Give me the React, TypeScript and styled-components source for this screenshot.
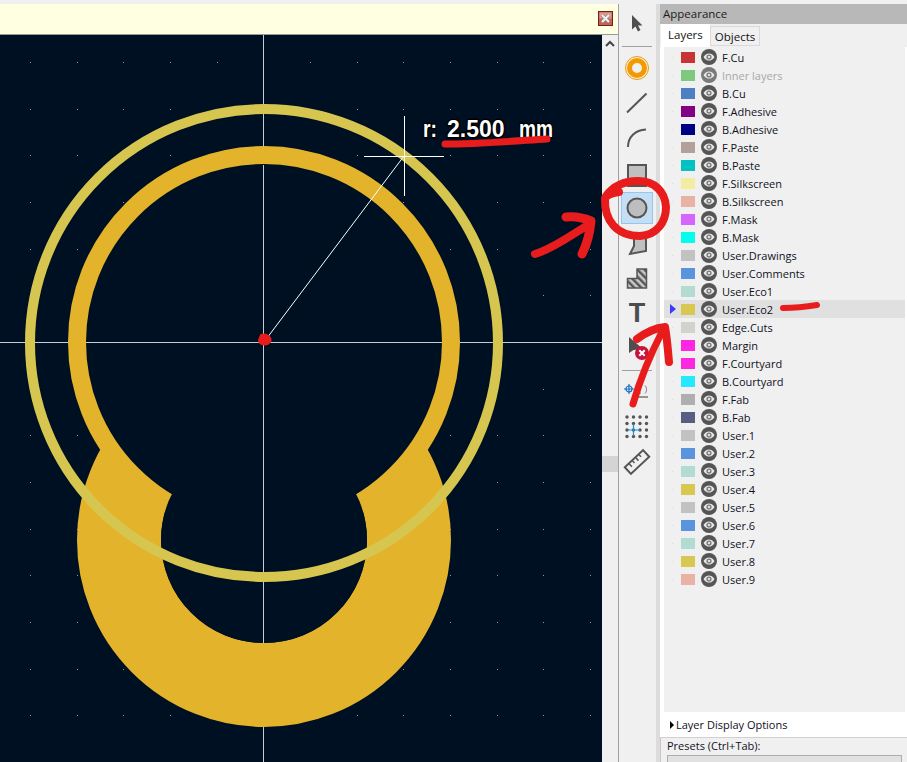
import React from 'react';
import styled, { createGlobalStyle } from 'styled-components';

const GlobalStyle = createGlobalStyle`
  html, body {
    margin: 0;
    height: 100%;
    overflow: hidden;
  }
  body {
    font-family: "Open Sans", "Noto Sans", sans-serif;
    background: #f0f0f0;
  }
`;

const layers: [string, string][] = [
  ['F.Cu', '#c83434'],
  ['Inner layers', '#7fc87f'],
  ['B.Cu', '#4d7fc4'],
  ['F.Adhesive', '#840084'],
  ['B.Adhesive', '#000084'],
  ['F.Paste', '#b4a09a'],
  ['B.Paste', '#00c2c2'],
  ['F.Silkscreen', '#f2eda1'],
  ['B.Silkscreen', '#e8b2a7'],
  ['F.Mask', '#d864ff'],
  ['B.Mask', '#02ffee'],
  ['User.Drawings', '#c2c2c2'],
  ['User.Comments', '#5994dc'],
  ['User.Eco1', '#b4dbd2'],
  ['User.Eco2', '#d8c852'],
  ['Edge.Cuts', '#d0d2cd'],
  ['Margin', '#ff26e2'],
  ['F.Courtyard', '#ff26e2'],
  ['B.Courtyard', '#26e9ff'],
  ['F.Fab', '#afafaf'],
  ['B.Fab', '#585d84'],
  ['User.1', '#c2c2c2'],
  ['User.2', '#5994dc'],
  ['User.3', '#b4dbd2'],
  ['User.4', '#d8c852'],
  ['User.5', '#c2c2c2'],
  ['User.6', '#5994dc'],
  ['User.7', '#b4dbd2'],
  ['User.8', '#d8c852'],
  ['User.9', '#e8b2a7'],
];

const Page = styled.div`
  position: relative;
  display: flex;
  width: 100vw;
  height: 100vh;
  padding-top: 4px;
  box-sizing: border-box;
  overflow: hidden;
  background: #f0f0f0;
`;

const EditorColumn = styled.div`
  display: flex;
  flex-direction: column;
  width: 618px;
  flex: none;
`;

const InfoBar = styled.div`
  display: flex;
  align-items: center;
  justify-content: flex-end;
  height: 31px;
  flex: none;
  padding: 0 5px 2px 0;
  box-sizing: border-box;
  background: #ffffe1;
  border-bottom: 1px solid #999;
`;

const CanvasRow = styled.div`
  display: flex;
  flex: 1;
  min-height: 0;
`;

const Canvas = styled.div`
  flex: 1;
  background: #001023;
  svg {
    display: block;
  }
`;

const ScrollTrack = styled.div`
  display: flex;
  flex-direction: column;
  align-items: center;
  width: 16px;
  flex: none;
  background: #f0f0f0;
`;

const ScrollArrow = styled.svg`
  margin-top: 5px;
`;

const ScrollThumb = styled.div`
  width: 100%;
  height: 16px;
  margin-top: 409px;
  background: #d4d4d4;
`;

const Toolbar = styled.div`
  display: flex;
  flex-direction: column;
  align-items: center;
  gap: 3px;
  width: 42px;
  flex: none;
  padding: 4px 1px 0 0;
  box-sizing: border-box;
  border-left: 1px solid #a0a0a0;
  border-right: 4px solid #dcdcdc;
`;

const ToolButton = styled.div<{ $active?: boolean }>`
  display: flex;
  align-items: center;
  justify-content: center;
  width: 32px;
  height: 32px;
  flex: none;
  box-sizing: border-box;
  background: ${(p) => (p.$active ? '#c4dff5' : 'transparent')};
  border: 1px solid ${(p) => (p.$active ? '#94c6ee' : 'transparent')};
`;

const ToolLetter = styled.span`
  font: bold 27px/1 "Liberation Sans", Arial, sans-serif;
  color: #4d4d4d;
`;

const ToolSeparator = styled.div`
  width: 30px;
  height: 1px;
  flex: none;
  margin: 3px 0 2px;
  background: #a0a0a0;
`;

const Panel = styled.div`
  display: flex;
  flex-direction: column;
  flex: 1;
  min-width: 0;
  background: #fff;
`;

const PanelTitle = styled.div`
  height: 20px;
  flex: none;
  padding-left: 3px;
  background: #b8b8b8;
  font-size: 11.5px;
  line-height: 20px;
  color: #1c1c1c;
`;

const TabRow = styled.div`
  display: flex;
  align-items: flex-end;
  height: 23px;
  flex: none;
  padding-left: 1px;
  background: #f0f0f0;
`;

const Tab = styled.div<{ $active?: boolean }>`
  height: ${(p) => (p.$active ? 23 : 20)}px;
  padding: 0 ${(p) => (p.$active ? 7 : 4)}px;
  margin-bottom: ${(p) => (p.$active ? 0 : 1)}px;
  box-sizing: border-box;
  background: ${(p) => (p.$active ? '#fff' : '#f0f0f0')};
  border: ${(p) => (p.$active ? 'none' : '1px solid #d9d9d9')};
  font-size: 11.5px;
  line-height: ${(p) => (p.$active ? 21 : 19)}px;
  color: #111;
`;

const LayerList = styled.div`
  flex: 1;
  min-height: 0;
  margin: 0 2px 0 4px;
  padding-top: 1px;
  background: #f0f0f0;
`;

const Row = styled.div<{ $highlight?: boolean }>`
  display: flex;
  align-items: center;
  height: 18px;
  background: ${(p) => (p.$highlight ? '#e0e0e0' : 'transparent')};
`;

const Indicator = styled.div`
  display: flex;
  align-items: center;
  justify-content: center;
  width: 17px;
  flex: none;
`;

const FaintDot = styled.i`
  display: block;
  width: 1px;
  height: 1px;
  background: #dcdcdc;
`;

const Swatch = styled.div<{ $color: string }>`
  width: 14px;
  height: 11px;
  flex: none;
  background: ${(p) => p.$color};
`;

const RowEye = styled.svg`
  margin: 0 5px 0 6px;
  flex: none;
`;

const LayerName = styled.span<{ $dim?: boolean }>`
  font-size: 11px;
  white-space: nowrap;
  color: ${(p) => (p.$dim ? '#a8a8a8' : '#10101e')};
`;

const DisplayOptions = styled.div`
  display: flex;
  align-items: center;
  gap: 2px;
  height: 25px;
  flex: none;
  padding-left: 10px;
  font-size: 11px;
  color: #10101e;
`;

const Caret = styled.i`
  width: 0;
  height: 0;
  border-left: 4px solid #000;
  border-top: 4px solid transparent;
  border-bottom: 4px solid transparent;
`;

const Presets = styled.div`
  height: 25px;
  flex: none;
  overflow: hidden;
  padding: 0 5px 0 6px;
  background: #f0f0f0;
  border-top: 1px solid #d0d0d0;
  border-left: 1px solid #c8c8c8;
  box-sizing: border-box;
`;

const PresetLabel = styled.div`
  height: 17px;
  font-size: 11px;
  line-height: 16px;
  color: #10101e;
`;

const PresetSelect = styled.div`
  height: 24px;
  box-sizing: border-box;
  background: #e1e1e1;
  border: 1px solid #adadad;
`;

const Annotations = styled.svg`
  position: absolute;
  left: 0;
  top: 0;
  pointer-events: none;
`;

function CloseIcon() {
  return (
    <svg width="15" height="15" viewBox="0 0 15 15">
      <rect x="0.5" y="0.5" width="14" height="14" fill="#c9604f" stroke="#6e241d" />
      <rect x="1.5" y="1.5" width="12" height="6" fill="#e39a8e" />
      <path d="M4 4l7 7M11 4l-7 7" stroke="#8a8a8a" strokeWidth="3.6" />
      <path d="M4 4l7 7M11 4l-7 7" stroke="#f2f2f2" strokeWidth="2" />
    </svg>
  );
}

function EyeIcon({ dim }: { dim: boolean }) {
  return (
    <RowEye width="16" height="16" viewBox="0 0 16 16">
      <circle cx="8" cy="8" r="8" fill={dim ? '#7a7a7a' : '#555'} />
      <path d="M2.500 8C4 5.300 6 4.400 8 4.400S12 5.300 13.500 8C12 10.700 10 11.600 8 11.600S4 10.700 2.500 8Z" fill="#e8e8e8" />
      <circle cx="8" cy="8" r="2.600" fill="#777" />
      <circle cx="8" cy="8" r="1.300" fill="#ddd" />
    </RowEye>
  );
}

function Icon({ children }: { children: React.ReactNode }) {
  return (
    <svg width="28" height="28" viewBox="0 0 28 28" fill="none">
      {children}
    </svg>
  );
}

function GridDots() {
  const at = [4, 10.5, 17, 23.5];
  return (
    <>
      {at.map((y) =>
        at.map((x) => <circle key={`${x}-${y}`} cx={x} cy={y} r="1.7" fill="#555" />),
      )}
      <path d="M10.500 11V23M5 17H17" stroke="#1c8fd6" strokeWidth="1.2" />
    </>
  );
}

function BoardCanvas() {
  const steps = Array.from({ length: 16 }, (_, i) => i);
  return (
    <svg width="602" height="727" viewBox="0 35 602 727">
      {steps.map((row) =>
        steps.map((col) => (
          <rect
            key={`${row}-${col}`}
            x={Math.round(30 + col * 46.67)}
            y={Math.round(62 + row * 46.67)}
            width="1"
            height="1"
            fill="#8d9aa3"
          />
        )),
      )}
      <circle cx="264" cy="540" r="145" fill="none" stroke="#e3b42b" strokeWidth="84" />
      <circle cx="264" cy="342" r="187" fill="#001023" stroke="#e3b42b" strokeWidth="18" />
      <circle cx="264" cy="540" r="103" fill="#001023" />
      <path
        d="M263.500 35V146M263.500 165V643M263.500 727V762M0 342.500H68M86 342.500H442M460 342.500H602"
        stroke="#c8ccd0"
        strokeWidth="1"
      />
      <circle cx="264" cy="343" r="234" fill="none" stroke="#d6c650" strokeWidth="10" />
      <path d="M404.500 116V196M364 156.500H444" stroke="#fff" strokeWidth="1" />
      <path d="M264 342L404 156" stroke="#fff" strokeWidth="1" />
      <g
        fontFamily='"Liberation Sans", Arial, sans-serif'
        fontWeight="bold"
        fontSize="23"
        fill="#fff"
        stroke="#000"
        strokeWidth="3"
        paintOrder="stroke"
      >
        <text x="423" y="137" textLength="14" lengthAdjust="spacingAndGlyphs">r:</text>
        <text x="447" y="137">2.500</text>
        <text x="519" y="137" textLength="34" lengthAdjust="spacingAndGlyphs">mm</text>
      </g>
    </svg>
  );
}

function RedMarks() {
  return (
    <Annotations width="907" height="762" viewBox="0 0 907 762" fill="none">
      <g stroke="#e81c1c" strokeLinecap="round" strokeLinejoin="round">
        <path d="M261 335C267 333 272 338 270 342C267 346 259 345 259 340Z" fill="#e81c1c" strokeWidth="2" />
        <path d="M445 144C480 144 515 141 547 139" strokeWidth="7" />
        <path
          d="M619 192C612 193 607 195 605 198C604 221 617 236 640 236C657 235 666 222 666 207C665 191 654 181 638 181C625 181 614 185 606 196"
          strokeWidth="8"
        />
        <path d="M535 254C555 248 572 234 590 224" strokeWidth="8" />
        <path d="M566 217C575 216 584 218 591 221C590 232 587 244 582 254" strokeWidth="9" />
        <path d="M783 308C795 308 805 307 817 305" strokeWidth="6" />
        <path d="M633 404C640 380 650 355 662 332" strokeWidth="7" />
        <path d="M637 339C645 333 655 328 665 327C667 338 668 350 669 362" strokeWidth="8" />
      </g>
    </Annotations>
  );
}

export default function App() {
  return (
    <Page>
      <GlobalStyle />
      <EditorColumn>
        <InfoBar>
          <CloseIcon />
        </InfoBar>
        <CanvasRow>
          <Canvas>
            <BoardCanvas />
          </Canvas>
          <ScrollTrack>
            <ScrollArrow width="10" height="7" viewBox="0 0 10 7" fill="none">
              <path d="M1 6l4-4 4 4" stroke="#444" strokeWidth="2" />
            </ScrollArrow>
            <ScrollThumb />
          </ScrollTrack>
        </CanvasRow>
      </EditorColumn>

      <Toolbar>
        <ToolButton>
          <Icon>
            <path d="M9 5V19.500L12.500 16.500L15 21.500L17.500 20L15 15.500H19.500Z" fill="#4f4f4f" />
          </Icon>
        </ToolButton>
        <ToolSeparator />
        <ToolButton>
          <Icon>
            <circle cx="14" cy="14" r="11.5" stroke="#f39a00" strokeWidth="1" />
            <circle cx="14" cy="14" r="7.5" stroke="#f39a00" strokeWidth="5" />
          </Icon>
        </ToolButton>
        <ToolButton>
          <Icon>
            <path d="M4 23.500L23.500 4.500" stroke="#555" strokeWidth="2" />
          </Icon>
        </ToolButton>
        <ToolButton>
          <Icon>
            <path d="M5 23C5 13 12 6 23 5.500" stroke="#555" strokeWidth="2" />
          </Icon>
        </ToolButton>
        <ToolButton>
          <Icon>
            <rect x="5" y="6" width="18" height="21" fill="#c0c0c0" stroke="#555" strokeWidth="2" />
          </Icon>
        </ToolButton>
        <ToolButton $active>
          <Icon>
            <circle cx="14" cy="14" r="9.5" fill="#bdbdbd" stroke="#555" strokeWidth="2" />
          </Icon>
        </ToolButton>
        <ToolButton>
          <Icon>
            <path d="M7 25L11 17V5H23V22Z" fill="#c0c0c0" stroke="#555" strokeWidth="2" />
          </Icon>
        </ToolButton>
        <ToolButton>
          <Icon>
            <defs>
              <pattern id="hatch" width="5" height="5" patternUnits="userSpaceOnUse" patternTransform="rotate(-45)">
                <rect width="5" height="5" fill="#c8c8c8" />
                <rect width="2.4" height="5" fill="#555" />
              </pattern>
            </defs>
            <path d="M4.500 24V14.500H14V5H23.500V24Z" fill="url(#hatch)" stroke="#555" strokeWidth="1.5" />
          </Icon>
        </ToolButton>
        <ToolButton>
          <ToolLetter>T</ToolLetter>
        </ToolButton>
        <ToolButton>
          <Icon>
            <path d="M6 3V19L10.500 16L20 15Z" fill="#4f4f4f" />
            <circle cx="19" cy="19" r="7" fill="#c8143c" />
            <path d="M16.300 16.300L21.700 21.700M21.700 16.300L16.300 21.700" stroke="#fff" strokeWidth="2" />
          </Icon>
        </ToolButton>
        <ToolSeparator />
        <ToolButton>
          <Icon>
            <circle cx="6" cy="11" r="3" stroke="#1c6fc0" strokeWidth="1.2" />
            <path d="M1 11H11M6 6V16" stroke="#1c6fc0" strokeWidth="1.2" />
            <path d="M9 19H25" stroke="#555" strokeWidth="1.2" />
            <path d="M18 7.500A2 4 0 1 0 18 15.500M22 7.500C24 9.500 24 13.500 22 15.500" stroke="#777" strokeWidth="1" />
          </Icon>
        </ToolButton>
        <ToolButton>
          <Icon>
            <GridDots />
          </Icon>
        </ToolButton>
        <ToolButton>
          <Icon>
            <g transform="rotate(-43 14 14)">
              <rect x="1.5" y="9.5" width="25" height="9" stroke="#555" strokeWidth="2" />
              <path d="M7 10V14M11.500 10V13M16 10V14M20.500 10V13" stroke="#555" strokeWidth="1.5" />
            </g>
          </Icon>
        </ToolButton>
      </Toolbar>

      <Panel>
        <PanelTitle>Appearance</PanelTitle>
        <TabRow>
          <Tab $active>Layers</Tab>
          <Tab>Objects</Tab>
        </TabRow>
        <LayerList>
          {layers.map(([name, color]) => (
            <Row key={name} $highlight={name === 'User.Eco2'}>
              <Indicator>
                {name === 'User.Eco2' ? (
                  <svg width="6" height="10" viewBox="0 0 6 10">
                    <path d="M0 0L6 5L0 10Z" fill="#3a3aff" />
                  </svg>
                ) : (
                  <FaintDot />
                )}
              </Indicator>
              <Swatch $color={color} />
              <EyeIcon dim={name === 'Inner layers'} />
              <LayerName $dim={name === 'Inner layers'}>{name}</LayerName>
            </Row>
          ))}
        </LayerList>
        <DisplayOptions>
          <Caret />
          Layer Display Options
        </DisplayOptions>
        <Presets>
          <PresetLabel>Presets (Ctrl+Tab):</PresetLabel>
          <PresetSelect />
        </Presets>
      </Panel>
      <RedMarks />
    </Page>
  );
}
